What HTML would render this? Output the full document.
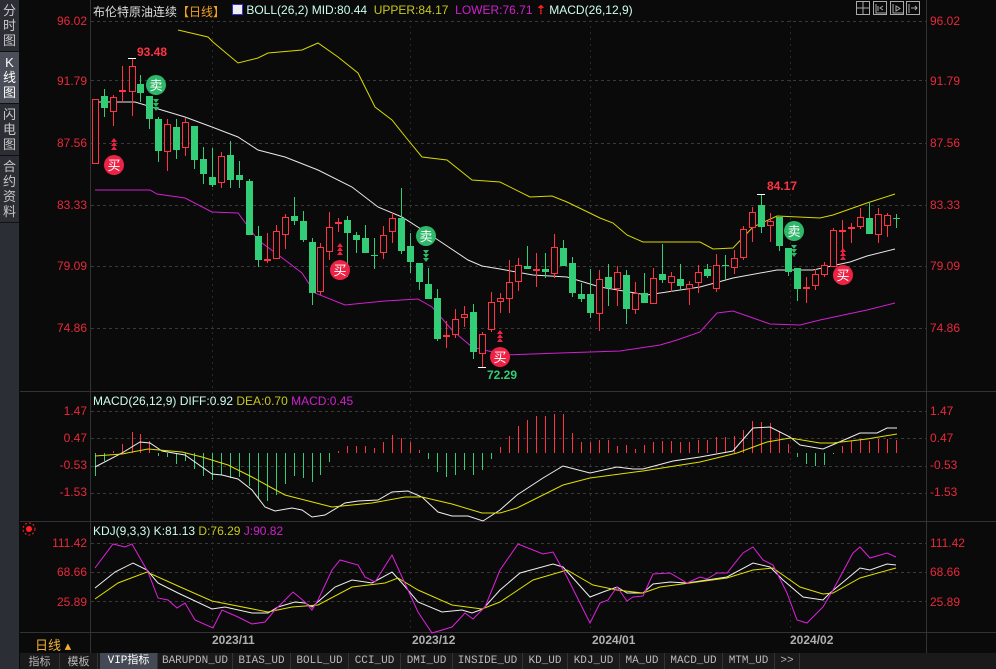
<!DOCTYPE html>
<html><head><meta charset="utf-8"><style>
*{margin:0;padding:0;box-sizing:border-box}
body{width:996px;height:669px;background:#0a0a0a;overflow:hidden;position:relative;font-family:"Liberation Sans","Noto Sans CJK SC",sans-serif}
.side{position:absolute;left:0;top:0;width:19px;height:669px;background:#2b2e35}
.side div{color:#c8c8c8;font-size:13px;line-height:15px;text-align:center;padding:3px 0;border-bottom:1px solid #111}
.side .on{background:#4a4e58;color:#fff}
.t{position:absolute;white-space:nowrap;font-size:12px}
.ax{position:absolute;color:#e8293a;font-size:12px;text-align:right}
.tabs{position:absolute;left:20px;top:653px;width:976px;height:16px;background:#1a1a1a;font-family:"Liberation Mono","Noto Sans CJK SC",monospace;font-size:11px;color:#b8b8b8}
.tabs span{position:absolute;top:0;height:16px;line-height:16px;border-right:1px solid #333;text-align:center}
</style></head><body>
<div class="side"><div>分<br>时<br>图</div><div class="on">K<br>线<br>图</div><div>闪<br>电<br>图</div><div>合<br>约<br>资<br>料</div></div>
<svg id="s" width="996" height="669" style="position:absolute;left:0;top:0"></svg>
<div class="t" style="left:93px;top:3px;color:#ddd;font-size:12px">布伦特原油连续<span style="color:#f0a020">【日线】</span></div>
<div class="t" style="left:232px;top:3px"><span style="display:inline-block;width:11px;height:11px;background:#eee;border:1px solid #33c;vertical-align:-1px"></span> <span style="color:#cfe">BOLL(26,2) MID:80.44</span> &nbsp;<span style="color:#c8c820">UPPER:84.17</span> &nbsp;<span style="color:#d020d0">LOWER:76.71</span> <span style="color:#f22;font-weight:bold">⇡</span> <span style="color:#cfe">MACD(26,12,9)</span></div>
<div class="t" style="left:93px;top:394px"><span style="color:#cfe">MACD(26,12,9) DIFF:0.92</span> <span style="color:#c8c820">DEA:0.70</span> <span style="color:#d020d0">MACD:0.45</span></div>
<div class="t" style="left:93px;top:524px"><span style="color:#cfe">KDJ(9,3,3) K:81.13</span> <span style="color:#c8c820">D:76.29</span> <span style="color:#d020d0">J:90.82</span></div>
<div class="ax" style="left:20px;width:67px;top:14px">96.02</div>
<div class="ax" style="left:20px;width:67px;top:74px">91.79</div>
<div class="ax" style="left:20px;width:67px;top:136px">87.56</div>
<div class="ax" style="left:20px;width:67px;top:198px">83.33</div>
<div class="ax" style="left:20px;width:67px;top:259px">79.09</div>
<div class="ax" style="left:20px;width:67px;top:321px">74.86</div>
<div class="ax" style="left:20px;width:67px;top:404px">1.47</div>
<div class="ax" style="left:20px;width:67px;top:431px">0.47</div>
<div class="ax" style="left:20px;width:67px;top:458px">-0.53</div>
<div class="ax" style="left:20px;width:67px;top:485px">-1.53</div>
<div class="ax" style="left:20px;width:67px;top:536px">111.42</div>
<div class="ax" style="left:20px;width:67px;top:565px">68.66</div>
<div class="ax" style="left:20px;width:67px;top:595px">25.89</div>
<div class="ax" style="left:930px;top:14px;text-align:left">96.02</div>
<div class="ax" style="left:930px;top:74px;text-align:left">91.79</div>
<div class="ax" style="left:930px;top:136px;text-align:left">87.56</div>
<div class="ax" style="left:930px;top:198px;text-align:left">83.33</div>
<div class="ax" style="left:930px;top:259px;text-align:left">79.09</div>
<div class="ax" style="left:930px;top:321px;text-align:left">74.86</div>
<div class="ax" style="left:930px;top:404px;text-align:left">1.47</div>
<div class="ax" style="left:930px;top:431px;text-align:left">0.47</div>
<div class="ax" style="left:930px;top:458px;text-align:left">-0.53</div>
<div class="ax" style="left:930px;top:485px;text-align:left">-1.53</div>
<div class="ax" style="left:930px;top:536px;text-align:left">111.42</div>
<div class="ax" style="left:930px;top:565px;text-align:left">68.66</div>
<div class="ax" style="left:930px;top:595px;text-align:left">25.89</div>
<div class="t" style="left:137px;top:45px;color:#ff3344;font-weight:bold">93.48</div>
<div class="t" style="left:767px;top:179px;color:#ff3344;font-weight:bold">84.17</div>
<div class="t" style="left:487px;top:368px;color:#33cc77;font-weight:bold">72.29</div>
<div class="t" style="left:212px;top:633px;color:#b0b0b0;font-weight:bold">2023/11</div>
<div class="t" style="left:412px;top:633px;color:#b0b0b0;font-weight:bold">2023/12</div>
<div class="t" style="left:592px;top:633px;color:#b0b0b0;font-weight:bold">2024/01</div>
<div class="t" style="left:790px;top:633px;color:#b0b0b0;font-weight:bold">2024/02</div>
<div class="t" style="left:35px;top:635px;color:#f0b030;font-size:13px">日线 ▴</div>
<div class="tabs">
<span style="left:0;width:40px;font-family:'Noto Sans CJK SC'">指标</span>
<span style="left:40px;width:38px;font-family:'Noto Sans CJK SC'">模板</span>
<span style="left:80px;width:58px;background:#444a55;color:#fff">VIP指标</span>
<span style="left:138px;width:75px">BARUPDN_UD</span>
<span style="left:213px;width:58px">BIAS_UD</span>
<span style="left:271px;width:58px">BOLL_UD</span>
<span style="left:329px;width:52px">CCI_UD</span>
<span style="left:381px;width:52px">DMI_UD</span>
<span style="left:433px;width:70px">INSIDE_UD</span>
<span style="left:503px;width:45px">KD_UD</span>
<span style="left:548px;width:52px">KDJ_UD</span>
<span style="left:600px;width:45px">MA_UD</span>
<span style="left:645px;width:58px">MACD_UD</span>
<span style="left:703px;width:52px">MTM_UD</span>
<span style="left:755px;width:25px">&gt;&gt;</span>
</div>
<script>
var s=document.getElementById('s'),h='';
function L(x1,y1,x2,y2,c,d){h+='<line x1="'+x1+'" y1="'+y1+'" x2="'+x2+'" y2="'+y2+'" stroke="'+c+'"'+(d?' stroke-dasharray="'+d+'"':'')+'/>';}
function P(a,c){h+='<polyline points="'+a.join(',')+'" fill="none" stroke="'+c+'" stroke-width="1"/>';}
L(90.5,0,90.5,653,'#333');L(926.5,0,926.5,653,'#333');
L(20,391.5,996,391.5,'#333');L(20,521.5,996,521.5,'#333');L(20,632.5,996,632.5,'#333');
[21,80,143,205,266,328,411,438,466,493,543,572,601].forEach(function(y){L(91,y+.5,926,y+.5,'#3a3a3a','3,3');});
[212,410,590,790].forEach(function(x){L(x+.5,20,x+.5,632,'#2a2a2a','2,4');});
P([178,30,208,37,213,42,238,63,258,58,268,53,302,50,318,43,338,57,358,73,375,107,392,120,408,140,422,157,447,160,472,180,500,182,530,197,552,196,567,202,600,218,613,223,627,235,643,242,700,242,713,249,733,248,753,227,777,216,820,218,833,215,867,203,895,194],'#d8d800');
P([95,102,135,102,155,108,185,117,212,127,238,137,258,150,285,157,318,170,352,187,378,207,402,217,435,238,468,260,482,266,500,269,533,275,567,277,600,287,647,295,700,287,733,278,777,270,813,270,850,262,867,256,895,249],'#e8e8e8');
P([95,190,150,190,157,194,185,198,212,212,238,213,258,240,285,260,302,273,315,293,345,305,385,301,418,299,432,307,452,330,472,347,505,355,560,353,620,351,640,348,660,345,677,340,700,332,717,313,733,311,753,318,770,324,800,325,820,320,867,310,895,303],'#d020d0');
var C=[[95,99,163,99,163,1],[104,96,108,89,117,0],[113,97,111,95,126,1],[122,90,91,66,102,1],[132,66,91,58,116,1],[140,84,93,75,102,0],[149,96,119,96,129,0],[158,119,151,117,162,0],[167,124,151,119,171,1],[176,127,150,119,159,0],[185,122,147,118,156,1],[194,126,160,126,169,0],[203,159,174,147,184,0],[212,177,185,148,187,0],[221,156,182,152,188,1],[230,155,180,141,188,0],[239,175,180,161,188,0],[249,181,235,179,235,0],[258,236,260,226,267,0],[267,259,260,233,263,1],[276,231,258,225,258,1],[285,217,234,214,249,1],[294,216,221,197,225,0],[303,221,240,211,242,0],[312,242,293,238,305,0],[320,247,291,243,295,1],[329,227,251,212,260,1],[338,222,223,218,232,1],[347,220,233,216,277,0],[356,235,240,232,253,0],[365,238,253,225,253,0],[374,255,256,238,269,0],[383,235,252,226,259,1],[392,218,231,212,243,1],[401,218,251,188,254,0],[410,246,262,233,273,0],[419,263,282,263,290,0],[428,284,299,268,299,0],[437,298,339,289,341,0],[446,335,336,321,348,1],[455,319,334,309,338,1],[464,314,317,306,327,1],[473,312,352,304,359,0],[482,334,353,332,367,1],[491,302,329,292,332,1],[500,298,301,293,313,1],[509,282,298,260,313,1],[518,265,281,258,291,1],[527,266,269,246,269,0],[536,269,270,253,287,1],[545,269,272,253,278,0],[554,247,273,234,278,1],[563,248,266,240,266,0],[572,263,293,257,297,0],[581,294,299,283,302,0],[590,294,313,269,318,0],[599,279,313,270,331,1],[608,277,288,264,306,0],[617,272,288,266,306,1],[626,275,309,270,324,0],[635,293,309,282,314,1],[644,293,303,273,303,0],[653,278,303,268,303,1],[662,274,280,244,283,0],[671,276,282,272,292,1],[680,279,286,264,290,0],[689,284,288,281,305,1],[698,272,282,265,293,1],[707,269,276,264,278,0],[716,265,288,254,292,1],[725,265,266,255,280,0],[734,258,267,250,274,1],[743,229,257,226,260,1],[752,212,227,207,242,1],[761,205,227,194,233,0],[770,221,225,213,242,1],[779,217,246,217,251,0],[788,248,272,248,276,0],[797,268,289,268,301,0],[806,287,288,277,303,1],[815,274,285,269,290,1],[824,265,274,262,277,1],[833,230,266,228,267,1],[842,230,231,220,253,1],[851,227,228,223,243,1],[860,217,226,208,229,1],[869,218,234,203,234,0],[878,214,234,208,243,1],[887,215,225,213,237,1],[896,218,219,214,228,0]];
var M=[-23,-8,2,9,21,19,12,-3,-4,-11,-8,-16,-23,-27,-22,-25,-24,-33,-45,-48,-42,-31,-23,-25,-29,-22,-9,2,7,7,7,5,11,18,15,11,3,-6,-19,-24,-22,-17,-22,-17,-6,6,17,27,33,37,37,39,39,20,11,11,13,13,7,8,4,8,11,12,12,11,11,13,13,16,16,17,23,32,31,30,22,9,-4,-11,-13,-12,-1,7,12,14,12,14,14,13];
C.forEach(function(c,i){var x=c[0],r=c[5],col=r?'#ff3344':'#33cc77';
 h+='<line x1="'+(x+.5)+'" y1="'+c[3]+'" x2="'+(x+.5)+'" y2="'+c[4]+'" stroke="'+col+'"/>';
 var t=c[1],b=Math.max(c[2],c[1]+1);
 if(r)h+='<rect x="'+(x-2.5)+'" y="'+(t+.5)+'" width="6" height="'+(b-t)+'" fill="#0a0a0a" stroke="'+col+'"/>';
 else h+='<rect x="'+(x-3)+'" y="'+t+'" width="7" height="'+(b-t)+'" fill="'+col+'"/>';
 var m=M[i];h+='<line x1="'+(x+.5)+'" y1="453" x2="'+(x+.5)+'" y2="'+(453-m)+'" stroke="'+(m>=0?'#ff3344':'#33cc77')+'"/>';
});
h+='<line x1="128" y1="58.5" x2="136" y2="58.5" stroke="#fff"/><line x1="478" y1="367.5" x2="486" y2="367.5" stroke="#fff"/><line x1="757" y1="194.5" x2="765" y2="194.5" stroke="#fff"/>';
P([95,467,122,453,140,442,150,443,162,451,185,455,212,474,222,475,238,479,252,490,265,507,275,511,292,508,302,510,312,517,325,515,345,503,358,501,378,500,392,492,408,491,422,497,438,512,452,516,468,516,483,521,500,510,517,495,543,478,563,466,590,473,617,467,633,469,643,469,673,461,700,457,733,451,753,428,770,427,790,437,800,445,823,449,837,443,860,433,877,433,887,428,897,428],'#f0f0f0');
P([95,456,122,454,148,449,182,452,202,457,228,465,252,477,272,488,285,495,332,507,372,503,405,497,422,497,452,504,482,513,500,513,517,508,563,485,590,478,643,471,700,462,737,453,767,442,790,438,820,443,833,443,867,439,897,434],'#e0e000');
P([95,588,115,572,133,563,147,570,158,583,178,593,212,609,225,607,252,613,268,613,278,607,295,602,305,603,312,607,335,587,352,580,372,583,392,572,402,583,418,602,442,612,462,610,472,613,483,609,500,590,520,573,553,564,563,567,590,597,603,592,617,587,627,593,643,593,653,584,670,582,687,583,727,577,753,563,770,567,783,580,803,597,823,600,830,593,860,568,870,570,887,564,896,565],'#f0f0f0');
P([95,599,118,583,147,572,178,586,212,601,268,612,292,607,318,605,352,587,385,583,398,578,418,590,452,605,482,609,500,602,533,580,567,570,593,585,617,590,643,593,660,587,727,578,753,570,773,568,800,587,823,594,833,593,860,578,896,568],'#e0e000');
P([95,568,113,544,125,547,132,544,148,572,158,598,168,600,177,608,185,603,195,620,213,628,222,610,238,617,252,624,265,622,275,610,293,592,305,602,312,610,318,600,332,570,340,560,358,565,365,577,375,582,392,555,418,612,432,633,452,627,465,613,473,619,485,607,500,570,518,544,543,554,553,552,567,577,590,623,600,603,608,600,617,587,627,601,633,597,643,596,653,574,670,573,687,583,700,577,707,579,717,573,727,573,743,553,753,547,763,560,773,565,787,593,797,620,807,623,823,607,833,590,853,553,860,547,870,558,887,553,896,557],'#e020e0');
function sig(x,y,buy){var col=buy?'#ee2244':'#2fb86a';
 h+='<circle cx="'+x+'" cy="'+y+'" r="10" fill="'+col+'"/><text x="'+x+'" y="'+(y+5)+'" fill="#fff" font-size="13" text-anchor="middle" font-family="Noto Sans CJK SC">'+(buy?'买':'卖')+'</text>';
 for(var k=0;k<3;k++){var ty=buy?y-15-k*4:y+14+k*4;
  h+=buy?'<path d="M'+(x-3)+' '+ty+'L'+(x+3)+' '+ty+'L'+x+' '+(ty-4)+'Z" fill="'+col+'"/>':'<path d="M'+(x-3)+' '+ty+'L'+(x+3)+' '+ty+'L'+x+' '+(ty+4)+'Z" fill="'+col+'"/>';}}
sig(114,165,1);sig(340,270,1);sig(500,357,1);sig(843,275,1);sig(156,85,0);sig(426,236,0);sig(794,231,0);
h+='<circle cx="29" cy="529" r="3" fill="#f22"/><circle cx="29" cy="529" r="6" fill="none" stroke="#f22" stroke-dasharray="2,2"/>';
[863,880,897,913].forEach(function(x){h+='<rect x="'+(x-6.5)+'" y="1.5" width="13" height="13" fill="none" stroke="#aaa"/>';});
h+='<path d="M857 8h12M863 2v12" stroke="#aaa"/><path d="M876 4v9h10M878 6v5M883 6l-3 2 3 2" stroke="#aaa" fill="none"/><path d="M893 4v9h10M896 6v5l4-2.5z" stroke="#aaa" fill="none"/><path d="M909 4v9M911 8h6M915 6l2 2-2 2" stroke="#aaa" fill="none"/>';
s.innerHTML=h;
</script>
</body></html>
